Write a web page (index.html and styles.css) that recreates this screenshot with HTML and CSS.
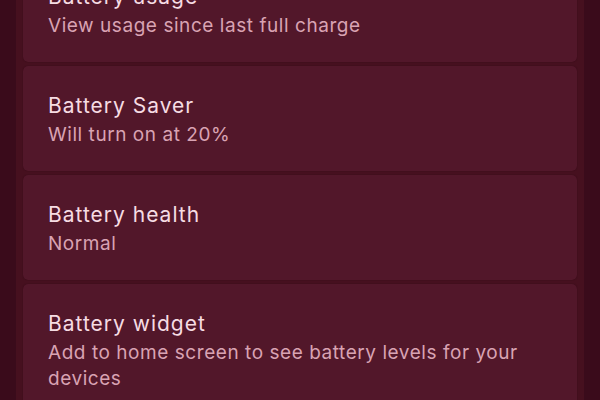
FILE: index.html
```html
<!DOCTYPE html>
<html>
<head>
<meta charset="utf-8">
<link rel="stylesheet" href="styles.css">
</head>
<body>
<div class="screen">
  <div class="panel">
    <div class="list">
      <div class="card">
        <div class="title">Battery usage</div>
        <div class="sub">View usage since last full charge</div>
      </div>
      <div class="card">
        <div class="title">Battery Saver</div>
        <div class="sub">Will turn on at 20%</div>
      </div>
      <div class="card">
        <div class="title">Battery health</div>
        <div class="sub">Normal</div>
      </div>
      <div class="card">
        <div class="title">Battery widget</div>
        <div class="sub">Add to home screen to see battery levels for your devices</div>
      </div>
    </div>
  </div>
</div>
</body>
</html>
```

FILE: styles.css
```css
html, body {
  margin: 0;
  padding: 0;
  background: #3a0b1b;
  overflow: hidden;
}
.screen {
  width: 600px;
  height: 400px;
  overflow: hidden;
  background: #3a0b1b;
  display: flex;
  justify-content: center;
}
.panel {
  width: 568px;
  height: 400px;
  background: #46101f;
  display: flex;
  justify-content: center;
}
.list {
  width: 554px;
  margin-top: -43px;
  display: flex;
  flex-direction: column;
  gap: 4px;
}
.card {
  background: #52172a;
  border-radius: 5px;
  padding: 24px 25px 23px;
  box-shadow: 0 0 1px rgba(30, 0, 10, 0.6);
  font-family: Inter, "Noto Sans", sans-serif;
}
.title {
  color: #f6dce3;
  font-size: 21px;
  line-height: 32px;
  letter-spacing: 1px;
}
.sub {
  color: #d9a3b3;
  font-size: 19px;
  line-height: 26px;
  letter-spacing: 0.55px;
}
```
